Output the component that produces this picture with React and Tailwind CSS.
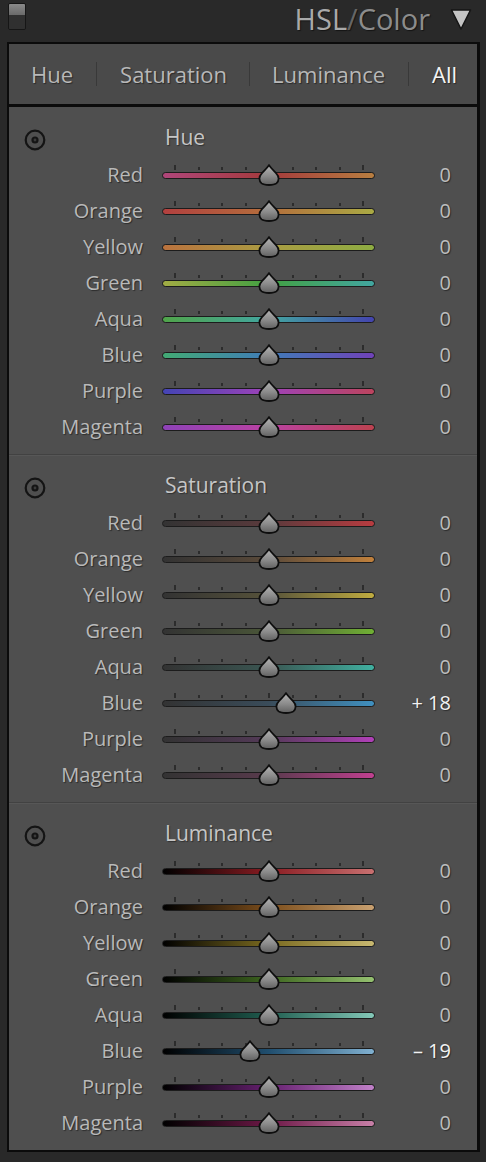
import React from "react";

const hueRows = [
  { name: "Red", stops: ["#b0467a", "#a43a3c", "#b87e40"] },
  { name: "Orange", stops: ["#b2403f", "#b46e3c", "#aaaa44"] },
  { name: "Yellow", stops: ["#ba723e", "#aa9c42", "#8eac42"] },
  { name: "Green", stops: ["#a2ac44", "#42a042", "#42a6a0"] },
  { name: "Aqua", stops: ["#50a44a", "#42a6a0", "#4444ae"] },
  { name: "Blue", stops: ["#42aa74", "#407cb8", "#7042b8"] },
  { name: "Purple", stops: ["#4444b4", "#9e42b8", "#bc445e"] },
  { name: "Magenta", stops: ["#8e42b8", "#ba42a2", "#bc4250"] },
];

const satRows = [
  { name: "Red", stops: ["#333333", "#5a3a3c", "#b83c40"] },
  { name: "Orange", stops: ["#333333", "#5a4a3a", "#c0803c"] },
  { name: "Yellow", stops: ["#333333", "#56523a", "#c0ac40"] },
  { name: "Green", stops: ["#333333", "#4a5638", "#70b034"] },
  { name: "Aqua", stops: ["#333333", "#3a5652", "#40b0a0"] },
  { name: "Blue", stops: ["#333333", "#3a4c5a", "#4090c0"], value: 18 },
  { name: "Purple", stops: ["#333333", "#543a58", "#b040b8"] },
  { name: "Magenta", stops: ["#333333", "#583a4c", "#c04090"] },
];

const lumRows = [
  { name: "Red", stops: ["#000000", "#8a1c22", "#c87070"] },
  { name: "Orange", stops: ["#000000", "#7c4e1c", "#c8a070"] },
  { name: "Yellow", stops: ["#000000", "#7a6a20", "#c8b870"] },
  { name: "Green", stops: ["#000000", "#3e6620", "#94c070"] },
  { name: "Aqua", stops: ["#000000", "#205e50", "#84c8b8"] },
  { name: "Blue", stops: ["#000000", "#204e6e", "#80b0d0"], value: -19 },
  { name: "Purple", stops: ["#000000", "#662070", "#c080c8"] },
  { name: "Magenta", stops: ["#000000", "#6c1846", "#c880a8"] },
];

function Target() {
  return (
    <svg width="22" height="22" viewBox="0 0 22 22">
      <circle cx="11" cy="11" r="9.3" fill="none" stroke="#141414" strokeWidth="2.2" />
      <circle cx="11" cy="11" r="3.6" fill="#141414" />
      <circle cx="11" cy="11" r="1.4" fill="#3a3a3a" />
    </svg>
  );
}

function Thumb() {
  return (
    <svg width="22" height="22" viewBox="0 0 22 22">
      <defs>
        <linearGradient id="thumbFill" x1="0" y1="0" x2="0" y2="1">
          <stop offset="0" stopColor="#b4b4b4" />
          <stop offset="0.55" stopColor="#8a8a8a" />
          <stop offset="1" stopColor="#606060" />
        </linearGradient>
      </defs>
      <path
        d="M11 1.3 C12.6 3.6 15.6 6.6 18.4 9.6 C21.4 12.6 21.2 17 18.4 19.4 C16.4 20.9 14 21 11 21 C8 21 5.6 20.9 3.6 19.4 C0.8 17 0.6 12.6 3.6 9.6 C6.4 6.6 9.4 3.6 11 1.3 Z"
        fill="url(#thumbFill)"
        stroke="#0e0e0e"
        strokeWidth="1.8"
      />
    </svg>
  );
}

function Slider({ stops, value = 0 }) {
  const thumbX = 106.5 + (value / 100) * 96;
  return (
    <div className="relative w-[213px] h-[36px]">
      {/* ticks */}
      <div className="absolute left-[12px] w-[190px] top-[8px] h-[5px] flex justify-between items-end">
        {Array.from({ length: 9 }).map((_, i) => (
          <div
            key={i}
            className={
              i === 0 || i === 4 || i === 8
                ? "w-[2px] h-[5px] bg-[#2c2c2c]"
                : "w-[2px] h-[3px] bg-[#2c2c2c]"
            }
          />
        ))}
      </div>
      {/* track */}
      <div
        className="absolute left-0 right-0 top-[14.5px] h-[7px] rounded-full border-[1.5px] border-[#1c1c1c]"
        style={{ background: `linear-gradient(to right, ${stops[0]}, ${stops[1]} 50%, ${stops[2]})` }}
      />
      {/* thumb */}
      <div className="absolute top-[7px] -ml-[11px]" style={{ left: thumbX }}>
        <Thumb />
      </div>
    </div>
  );
}

function Row({ row }) {
  const v = row.value || 0;
  const label = v > 0 ? `+ ${v}` : v < 0 ? `– ${Math.abs(v)}` : "0";
  return (
    <div className="flex items-center h-[36px]">
      <div className="w-[134px] text-right text-[20px] text-[#b9b9b9] [text-shadow:1px_1px_1px_rgba(0,0,0,0.45)]">
        {row.name}
      </div>
      <div className="ml-[19px]">
        <Slider stops={row.stops} value={v} />
      </div>
      <div
        className={`w-[76px] text-right text-[20px] [text-shadow:1px_1px_1px_rgba(0,0,0,0.45)] ${
          v !== 0 ? "text-[#f2f2f2]" : "text-[#bdbdbd]"
        }`}
      >
        {label}
      </div>
    </div>
  );
}

function Section({ title, rows, first }) {
  return (
    <>
      {!first && (
        <div>
          <div className="h-px bg-[#424242]" />
          <div className="h-px bg-[#575757]" />
        </div>
      )}
      <div className={`${first ? "pt-[17px]" : "pt-[16px]"} pb-[9px]`}>
        <div className="flex items-center h-[28px]">
          <div className="w-[156px] pl-[15px] pt-[4px]">
            <Target />
          </div>
          <div className="text-[21px] text-[#c6c6c6] [text-shadow:1px_1px_1px_rgba(0,0,0,0.4)]">{title}</div>
        </div>
        <div className="mt-[5px]">
          {rows.map((r) => (
            <Row key={title + r.name} row={r} />
          ))}
        </div>
      </div>
    </>
  );
}

export default function App() {
  return (
    <div className="w-[486px] h-[1162px] bg-[#292929] font-['Open_Sans',sans-serif] overflow-hidden">
      {/* Header */}
      <div className="relative h-[42px]">
        <div className="absolute left-[8px] top-[3px] w-[18px] h-[27px] rounded-[2px] border border-[#161616] overflow-hidden flex flex-col">
          <div className="h-[11px] bg-gradient-to-b from-[#8a8a8a] to-[#6a6a6a]" />
          <div className="flex-1 bg-[#303030]" />
        </div>
        <div className="absolute right-[14px] top-[4px] flex items-center gap-[20px]">
          <div className="text-[29px] leading-[30px] [text-shadow:1px_1px_1px_rgba(0,0,0,0.5)]">
            <span className="text-[#a9a9a9]">HSL</span>
            <span className="text-[#666666]">/</span>
            <span className="text-[#8c8c8c]">Color</span>
          </div>
          <svg width="22" height="23" viewBox="0 0 22 23">
            <path d="M1.5 2 L20.5 2 L11 21 Z" fill="#c4c4c4" stroke="#151515" strokeWidth="1.5" strokeLinejoin="round" />
          </svg>
        </div>
      </div>

      {/* Panel */}
      <div className="ml-[7px] w-[473px] border-2 border-r-[3px] border-[#0b0b0b] bg-[#4f4f4f]">
        {/* Tabs */}
        <div className="h-[63px] bg-[#4a4a4a] border-b-[3px] border-[#0b0b0b] flex items-center pl-[22px] text-[22px] [text-shadow:1px_1px_1px_rgba(0,0,0,0.45)]">
          <span className="text-[#b8b8b8]">Hue</span>
          <span className="mx-[23px] w-px h-[24px] bg-[#393939]" />
          <span className="text-[#b8b8b8]">Saturation</span>
          <span className="mx-[22px] w-px h-[24px] bg-[#393939]" />
          <span className="text-[#b8b8b8]">Luminance</span>
          <span className="mx-[23px] w-px h-[24px] bg-[#393939]" />
          <span className="text-[#f4f4f4]">All</span>
        </div>

        <Section title="Hue" rows={hueRows} first />
        <Section title="Saturation" rows={satRows} />
        <Section title="Luminance" rows={lumRows} />
      </div>
    </div>
  );
}
